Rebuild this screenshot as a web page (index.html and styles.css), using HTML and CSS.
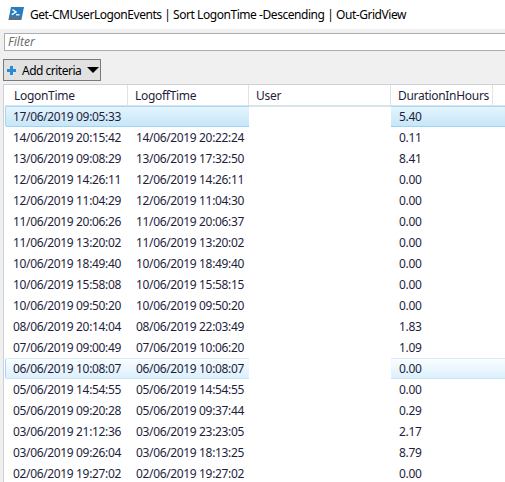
FILE: index.html
```html
<!DOCTYPE html>
<html lang="en">
<head>
  <meta charset="UTF-8" />
  <title>Out-GridView</title>
  <link rel="stylesheet" href="styles.css">
</head>
<body>

  <header class="titlebar">
    <svg class="ps-icon" width="17" height="16" viewBox="0 0 17 16">
      <path d="M3 1 H16 L14 11 H1 Z" fill="#2a7cc0"/>
      <path d="M1 11 H14 L13.4 14 H0.4 Z" fill="#5b6f80"/>
      <path d="M4.5 3.5 L8 6 L3.8 8.6" fill="none" stroke="#fff" stroke-width="1.4"/>
      <path d="M8 8.8 H11.5" stroke="#fff" stroke-width="1.3"/>
    </svg>
    <span class="title-text">Get-CMUserLogonEvents | Sort LogonTime -Descending | Out-GridView</span>
  </header>

  <main class="content">
    <div class="filter-box">Filter</div>

    <button class="btn-criteria">
      <svg class="plus" width="9" height="9" viewBox="0 0 9 9">
        <path d="M3 0 H6 V3 H9 V6 H6 V9 H3 V6 H0 V3 H3 Z" fill="#2b8ad6"/>
      </svg>
      <span class="btn-label">Add criteria</span>
      <span class="caret"></span>
    </button>

    <div class="grid" id="grid">
      <div class="cell head">LogonTime</div>
      <div class="cell head">LogoffTime</div>
      <div class="cell head">User</div>
      <div class="cell head">DurationInHours</div>
      <div class="cell head last"></div>
    </div>
  </main>

  <script>
    const rows = [
      ["17/06/2019 09:05:33", "", "5.40", "selected"],
      ["14/06/2019 20:15:42", "14/06/2019 20:22:24", "0.11"],
      ["13/06/2019 09:08:29", "13/06/2019 17:32:50", "8.41"],
      ["12/06/2019 14:26:11", "12/06/2019 14:26:11", "0.00"],
      ["12/06/2019 11:04:29", "12/06/2019 11:04:30", "0.00"],
      ["11/06/2019 20:06:26", "11/06/2019 20:06:37", "0.00"],
      ["11/06/2019 13:20:02", "11/06/2019 13:20:02", "0.00"],
      ["10/06/2019 18:49:40", "10/06/2019 18:49:40", "0.00"],
      ["10/06/2019 15:58:08", "10/06/2019 15:58:15", "0.00"],
      ["10/06/2019 09:50:20", "10/06/2019 09:50:20", "0.00"],
      ["08/06/2019 20:14:04", "08/06/2019 22:03:49", "1.83"],
      ["07/06/2019 09:00:49", "07/06/2019 10:06:20", "1.09"],
      ["06/06/2019 10:08:07", "06/06/2019 10:08:07", "0.00", "hover"],
      ["05/06/2019 14:54:55", "05/06/2019 14:54:55", "0.00"],
      ["05/06/2019 09:20:28", "05/06/2019 09:37:44", "0.29"],
      ["03/06/2019 21:12:36", "03/06/2019 23:23:05", "2.17"],
      ["03/06/2019 09:26:04", "03/06/2019 18:13:25", "8.79"],
      ["02/06/2019 19:27:02", "02/06/2019 19:27:02", "0.00"]
    ];

    const grid = document.getElementById("grid");
    rows.forEach(r => {
      const state = r[3] || "";
      // the User column stays white even when the row is highlighted
      const cells = [
        [r[0], state], [r[1], state], ["", ""], [r[2], state], ["", state]
      ];
      cells.forEach(([text, cls], i) => {
        const div = document.createElement("div");
        div.className = "cell " + cls + (i === 0 ? " first" : "") + (i === 4 ? " last" : "");
        div.textContent = text;
        grid.appendChild(div);
      });
    });
  </script>

</body>
</html>
```

FILE: styles.css
```css
body {
  margin: 0;
  font-family: 'Noto Sans', 'Open Sans', sans-serif;
  font-size: 12px;
  background: #f0f0f0;
  color: #1e1e3c;
  overflow: hidden;
  height: 482px;
}

.titlebar {
  background: #fff;
  height: 29px;
  display: flex;
  align-items: center;
  padding-left: 8px;
  color: #000;
}

.ps-icon {
  margin-right: 5px;
  margin-top: -1px;
}

.title-text {
  font-size: 12px;
  letter-spacing: -0.45px;
}

.content {
  padding: 4px 0 0 3px;
}

.filter-box {
  background: #fff;
  border: 1px solid #abadb3;
  border-right: none;
  height: 16px;
  line-height: 16px;
  margin-left: 1px;
  padding-left: 3px;
  font-style: italic;
  color: #6d6d6d;
}

.btn-criteria {
  display: flex;
  align-items: center;
  margin-top: 8px;
  height: 22px;
  width: 98px;
  padding: 0 0 0 3px;
  background: #e1e1e1;
  border: 1px solid #7a7a7a;
  font-family: inherit;
  font-size: 12px;
  color: #000;
  white-space: nowrap;
}

.plus {
  margin-right: 6px;
  flex-shrink: 0;
}

.btn-label {
  letter-spacing: -0.5px;
}

.caret {
  width: 0;
  height: 0;
  border-left: 6px solid transparent;
  border-right: 6px solid transparent;
  border-top: 6px solid #000;
  margin-left: 6px;
}

.grid {
  margin-top: 3px;
  background: #fff;
  border-left: 1px solid #cdd1d6;
  border-top: 1px solid #cdd1d6;
  height: 400px;
  display: grid;
  grid-template-columns: 123px 121px 142px 102px 1fr;
  grid-auto-rows: 21px;
  align-content: start;
  padding-left: 1px;
}

.cell {
  line-height: 21px;
  padding-left: 8px;
  white-space: nowrap;
  overflow: hidden;
  letter-spacing: -0.35px;
}

.head {
  height: 20px;
  line-height: 22px;
  padding-left: 7px;
  letter-spacing: -0.3px;
  color: #1e1e3c;
  border-right: 1px solid #e3e3e3;
  border-bottom: 2px solid #d9e3ea;
}

.head.last {
  border-right: none;
}

.head:first-child {
  padding-left: 9px;
}

.cell.selected {
  background: linear-gradient(#e4f4fd, #c6e6f9);
  border-top: 1px solid #a8d8f5;
  border-bottom: 1px solid #9fd3f3;
  line-height: 19px;
}

.cell.hover {
  background: linear-gradient(#fafdff, #dcf0fc);
  border-top: 1px solid #d6ecfb;
  border-bottom: 1px solid #c8e6fa;
  line-height: 19px;
}

.cell.selected.first, .cell.hover.first {
  border-left: 1px solid #a8d8f5;
  border-radius: 2px 0 0 2px;
  padding-left: 7px;
}
```
